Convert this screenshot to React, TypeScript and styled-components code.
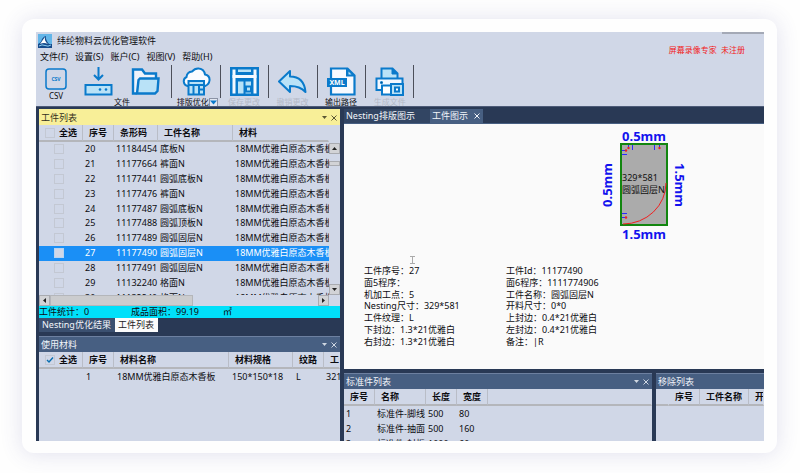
import React from "react";
import styled, { createGlobalStyle, css } from "styled-components";

const c = {
  surface: "#d0d7e7",
  dark: "#293955",
  bar: "#475f82",
  line: "#b4b6bb",
  icon: "#0a7acb",
  iconFill: "#b9e2f7",
};

const GlobalStyle = createGlobalStyle`
  * { box-sizing: border-box; }
  body {
    margin: 0;
    background: #fefefe;
    color: #0c0c10;
    font: 9px/12px "Noto Sans", "Noto Sans CJK SC", sans-serif;
  }
  button { font: inherit; color: inherit; border: 0; padding: 0; background: none; }
  svg { display: block; flex: none; }
`;

const Page = styled.div`
  height: 100vh;
  padding: 19px 23px 20px 22px;
  display: flex;
  overflow: hidden;
`;

const Card = styled.div`
  flex: 1;
  min-width: 0;
  padding: 13px 13px 12px 14px;
  border-radius: 12px;
  background: #fefefe;
  box-shadow: 0 1px 22px rgba(70, 70, 150, 0.16);
  display: flex;
`;

const AppWindow = styled.div`
  flex: 1;
  min-width: 0;
  display: flex;
  flex-direction: column;
  background: ${c.surface};
  overflow: hidden;
`;

const Header = styled.header`
  position: relative;
`;

const TitleBar = styled.div`
  height: 18px;
  padding-left: 2px;
  display: flex;
  align-items: center;
  gap: 5px;
`;

const MenuBar = styled.nav`
  height: 13px;
  padding-left: 4px;
  display: flex;
  align-items: center;
  gap: 7px;
`;

const Watermark = styled.div`
  position: absolute;
  right: 19px;
  top: 12px;
  font-size: 8px;
  color: #f21a1a;
`;

const EdgeTab = styled.div`
  position: absolute;
  right: 0;
  top: 0;
  width: 42px;
  height: 2px;
  background: #a4a9b6;
`;

const Toolbar = styled.div`
  height: 43px;
  padding-top: 2px;
  display: flex;
  align-items: flex-start;
  font-size: 8px;
  line-height: 10px;
`;

const FileGroup = styled.div`
  width: 135px;
  height: 41px;
  padding-left: 8px;
  display: flex;
  gap: 16px;
`;

const CsvButton = styled.button`
  width: 24px;
  padding-top: 3px;
  display: flex;
  flex-direction: column;
  align-items: center;
  gap: 1px;
`;

const FileTools = styled.div`
  display: flex;
  flex-direction: column;
  align-items: center;
`;

const IconRow = styled.div`
  height: 33px;
  display: flex;
  gap: 18px;
  align-items: center;
`;

const GroupStrip = styled.div`
  width: 244px;
  display: flex;
  border-right: 1px solid transparent;
`;

const Group = styled.div`
  flex: 1;
  display: flex;
  flex-direction: column;
`;

const GroupFace = styled.div<{ $last?: boolean }>`
  height: 33px;
  display: flex;
  align-items: center;
  justify-content: center;
  border-left: 1px solid #4c4f5a;
  ${(p) => p.$last && css`border-right: 1px solid #4c4f5a;`}
`;

const GroupLabel = styled.div<{ $off?: boolean; $drop?: boolean }>`
  display: flex;
  justify-content: center;
  height: 8px;
  line-height: 8px;
  white-space: nowrap;
  padding-left: ${(p) => (p.$drop ? "4px" : "0")};
  color: ${(p) => (p.$off ? "#b4bac8" : "#0c0c10")};
`;

const DropButton = styled.button`
  width: 9px;
  height: 9px;
  border: 1px solid #8b93a5;
  background: #e3e8f2;
  display: flex;
  align-items: center;
  justify-content: center;
`;

const Workspace = styled.main`
  flex: 1;
  min-height: 0;
  display: flex;
  gap: 4px;
  padding: 2px 0 0 3px;
  background: ${c.dark};
  border-top: 1px solid #4d5b78;
`;

const LeftDock = styled.div`
  width: 301px;
  flex: none;
  display: flex;
  flex-direction: column;
`;

const RightDock = styled.div`
  flex: 1;
  min-width: 0;
  display: flex;
  flex-direction: column;
`;

const Panel = styled.section<{ $grow?: boolean }>`
  display: flex;
  flex-direction: column;
  min-width: 0;
  min-height: 0;
  overflow: hidden;
  background: ${c.surface};
  ${(p) => p.$grow && css`flex: 1;`}
`;

const PanelTitle = styled.div<{ $active?: boolean }>`
  height: 16px;
  flex: none;
  padding: 0 3px 0 2px;
  display: flex;
  align-items: center;
  gap: 4px;
  white-space: nowrap;
  color: ${(p) => (p.$active ? "#33311c" : "#f2f5fa")};
  background: ${(p) => (p.$active ? "#f8ef98" : c.bar)};
  border-top: 1px solid ${(p) => (p.$active ? "#f8ef98" : "#6d80a0")};
`;

const PanelName = styled.span`
  flex: 1;
`;

const PanelButton = styled.button`
  display: flex;
  opacity: 0.8;
`;

const Table = styled.table<{ $fill?: boolean }>`
  table-layout: fixed;
  border-collapse: separate;
  border-spacing: 0;
  flex: none;
  width: ${(p) => (p.$fill ? "290px" : "100%")};
  ${(p) => p.$fill && css`height: 180px;`}
`;

const Th = styled.th<{ $plain?: boolean }>`
  height: 17px;
  padding: 0 0 0 6px;
  text-align: left;
  font-weight: 700;
  white-space: nowrap;
  overflow: hidden;
  border-right: 1px solid ${(p) => (p.$plain ? "transparent" : "#b9bdc7")};
  border-bottom: 2px solid ${c.line};
`;

const Td = styled.td<{ $indent?: boolean }>`
  padding: 0 0 0 ${(p) => (p.$indent ? "3px" : "2px")};
  white-space: nowrap;
  overflow: hidden;
`;

const Row = styled.tr<{ $selected?: boolean }>`
  ${(p) => p.$selected && css`background: #1a8ff6; color: #fff;`}
`;

const RoomyRow = styled.tr`
  height: 15px;
`;

const CheckLabel = styled.label`
  display: flex;
  align-items: center;
  gap: 4px;
`;

const Check = styled.input<{ $row?: boolean; $lit?: boolean }>`
  appearance: none;
  display: block;
  width: 10px;
  height: 10px;
  margin: 0 0 0 ${(p) => (p.$row ? "13px" : "0")};
  border: 1px solid ${(p) => (p.$lit ? "#b7d4f2" : "#c3c8d3")};
  background: ${(p) => (p.$lit ? "#d0d7e7" : "transparent")};
  &:checked {
    background: url("data:image/svg+xml,%3Csvg xmlns='http://www.w3.org/2000/svg' viewBox='0 0 8 8'%3E%3Cpath d='M1 4l2 2 4-4.500' fill='none' stroke='%230a6fb0' stroke-width='1.400'/%3E%3C/svg%3E") center / 8px no-repeat;
  }
`;

const ListArea = styled.div`
  height: 170px;
  flex: none;
  display: flex;
  overflow: hidden;
`;

const VScroll = styled.div`
  width: 11px;
  flex: none;
  margin-top: 18px;
  display: flex;
  flex-direction: column;
`;

const ScrollButton = styled.button`
  width: 11px;
  height: 11px;
  flex: none;
  display: flex;
  align-items: center;
  justify-content: center;
  border: 1px solid #a9abb0;
  background: #d2d3d6;
`;

const VThumb = styled.div`
  height: 5px;
  margin: 7px 0 auto;
  border: 1px solid #a9abb0;
  background: #d2d3d6;
`;

const HScroll = styled.div`
  height: 11px;
  flex: none;
  display: flex;
  padding-right: 11px;
`;

const HThumb = styled.div`
  width: 143px;
  margin-right: auto;
  border: 1px solid #b4b6ba;
  background: #cbccce;
`;

const Status = styled.div`
  height: 12px;
  flex: none;
  display: grid;
  grid-template-columns: 92px 92px 1fr;
  background: #00e0fa;
`;

const BottomTabs = styled.div`
  height: 18px;
  flex: none;
  display: flex;
  align-items: flex-start;
`;

const BottomTab = styled.button<{ $active?: boolean }>`
  height: 14px;
  padding: 0 4px 0 3px;
  white-space: nowrap;
  color: ${(p) => (p.$active ? "#222" : "#f2f5fa")};
  background: ${(p) => (p.$active ? "#fbfbfb" : "#3b5070")};
`;

const TopTabs = styled.div`
  height: 15px;
  flex: none;
  display: flex;
  border-bottom: 1px solid #475f82;
`;

const TopTab = styled.button<{ $active?: boolean }>`
  height: 14px;
  padding: 0 3px 0 2px;
  display: flex;
  align-items: center;
  gap: 6px;
  white-space: nowrap;
  color: #f2f5fa;
  min-width: ${(p) => (p.$active ? "0" : "86px")};
  background: ${(p) => (p.$active ? c.bar : "#324563")};
`;

const Canvas = styled.section`
  position: relative;
  flex: none;
  height: 245px;
  margin-bottom: 4px;
  padding-top: 4px;
  display: flex;
  flex-direction: column;
  background: #fafafa;
`;

const PartDrawing = styled.div`
  height: 137px;
  padding-right: 74px;
  display: flex;
  justify-content: flex-end;
`;

const TextCursor = styled.svg`
  position: absolute;
  left: 66px;
  top: 132px;
`;

const Info = styled.div`
  height: 82px;
  padding-left: 20px;
  display: grid;
  grid-template-columns: 142px 1fr;
  grid-auto-rows: 1fr;
  align-items: center;
  line-height: 11px;
  white-space: nowrap;
`;

const LowerPanels = styled.div`
  flex: 1;
  min-height: 0;
  display: grid;
  grid-template-columns: 308px 1fr;
  gap: 4px;
`;

function Logo() {
  return (
    <svg width="14" height="14" viewBox="0 0 14 14">
      <rect width="14" height="14" fill="#62b5e8" />
      <path d="M0 10q3-1 4-5 2-3 4-3-1 3 3 8h3v4H0z" fill="#154b8c" />
      <path d="M2 10l5-7q-1 4 3 7-4-2-8 0z" fill="#fff" />
      <path d="M1 12q3-2 6-.5t6-.5" stroke="#8fd0f2" fill="none" />
    </svg>
  );
}

function CsvIcon() {
  return (
    <svg width="22" height="22" viewBox="0 0 22 22">
      <rect x="1" y="1" width="20" height="20" rx="3" fill="none" stroke={c.icon} strokeWidth="1.500" />
      <text x="11" y="12.500" textAnchor="middle" fontSize="5" fontWeight="700" fill={c.icon}>CSV</text>
    </svg>
  );
}

function ImportIcon() {
  return (
    <svg width="29" height="29" viewBox="0 0 29 29" fill="none" stroke={c.icon} strokeWidth="2">
      <path d="M14.500 0v12M10 8l4.500 4.500L19 8" />
      <rect x="1.500" y="18" width="26" height="9.500" fill={c.iconFill} />
      <circle cx="16" cy="22.500" r="1.300" fill={c.icon} stroke="none" />
      <circle cx="22" cy="22.500" r="1.300" fill={c.icon} stroke="none" />
    </svg>
  );
}

function FolderIcon() {
  return (
    <svg width="29" height="29" viewBox="0 0 29 29" fill="none" stroke={c.icon} strokeWidth="2.400">
      <path d="M5.500 26.500H2V2.500h9l3 4h11v5" fill="#eef3fb" />
      <path d="M9 11.500h18.500L26.500 24l-2.500 2.500H6L7.500 13z" fill={c.iconFill} />
    </svg>
  );
}

function CloudIcon() {
  return (
    <svg width="30" height="29" viewBox="0 0 30 29" fill="none" stroke={c.icon} strokeWidth="2">
      <path d="M6.500 19A4.800 4.800 0 0 1 5.500 10Q6 5 11 4.500 14 1 18 1.500q5 .5 6 6 5 1 4.500 6-.5 4-4.500 5.500z" fill="#fafcff" />
      <rect x="7.500" y="14" width="15.500" height="13.500" fill={c.iconFill} />
      <path d="M7 18h16.500M12.500 18v9M18 18v9M18 22.500h5" />
    </svg>
  );
}

function SaveIcon() {
  return (
    <svg width="29" height="29" viewBox="0 0 29 29">
      <rect width="29" height="29" fill={c.icon} />
      <rect x="2.500" y="2.500" width="3" height="24" fill="#f4f9ff" />
      <rect x="23.500" y="2.500" width="3" height="24" fill="#f4f9ff" />
      <rect x="8" y="2.500" width="13" height="2.500" fill={c.iconFill} />
      <rect x="2.500" y="8" width="24" height="3" fill="#f4f9ff" />
      <rect x="8" y="14.500" width="13" height="12" fill={c.iconFill} />
      <path d="M14.500 12.500v16M16 19.500h5v5h-5z" stroke={c.icon} strokeWidth="2" fill={c.iconFill} />
    </svg>
  );
}

function UndoIcon() {
  return (
    <svg width="29" height="29" viewBox="0 0 29 29">
      <path d="M1 14.500L12 4v5.500q14 0 15.500 15.500Q22 19 12 19v6z" fill={c.iconFill} stroke={c.icon} strokeWidth="2" strokeLinejoin="round" />
    </svg>
  );
}

function XmlIcon() {
  return (
    <svg width="29" height="29" viewBox="0 0 29 29">
      <path d="M4 1.500h16.500l7 7v19H4z" fill="#f7faff" stroke={c.icon} strokeWidth="2.200" />
      <path d="M19 1l9 8.500h-9z" fill={c.icon} />
      <path d="M21.500 4.500v3h3z" fill={c.iconFill} />
      <rect x="0" y="11" width="20" height="9" fill={c.icon} />
      <text x="10" y="18" textAnchor="middle" fontSize="7" fontWeight="700" fill="#fff">XML</text>
    </svg>
  );
}

function PrintIcon() {
  return (
    <svg width="29" height="29" viewBox="0 0 29 29" stroke={c.icon} strokeWidth="2">
      <path d="M6.500 11V1.500h11l5 5V11" fill={c.iconFill} />
      <path d="M17 1v6h6z" fill={c.icon} strokeWidth="1" />
      <path d="M1.500 23V11.500h26V23z" fill="#f4f8ff" />
      <circle cx="6.500" cy="15.500" r=".6" />
      <path d="M7 18.500h10v9H7z" fill="#fff" />
      <rect x="16" y="17" width="12" height="11" fill={c.iconFill} />
      <rect x="20" y="20.500" width="4" height="4" fill="#fff" />
    </svg>
  );
}

function Arrow({ dir, color = "#222", size = 5 }: { dir: "up" | "down" | "left" | "right"; color?: string; size?: number }) {
  const points = { up: "0,4 5,4 2.5,1", down: "0,1 5,1 2.5,4", left: "4,0 4,5 1,2.5", right: "1,0 1,5 4,2.5" }[dir];
  return (
    <svg width={size} height={size} viewBox="0 0 5 5">
      <polygon points={points} fill={color} />
    </svg>
  );
}

function Cross() {
  return (
    <svg width="6" height="6" viewBox="0 0 6 6">
      <path d="M.5 .5l5 5m0-5l-5 5" stroke="currentColor" />
    </svg>
  );
}

function Title({ text, active, bare }: { text: string; active?: boolean; bare?: boolean }) {
  return (
    <PanelTitle $active={active}>
      <PanelName>{text}</PanelName>
      {!bare && (
        <>
          <PanelButton aria-label="选项"><Arrow dir="down" color="currentColor" /></PanelButton>
          <PanelButton aria-label="关闭"><Cross /></PanelButton>
        </>
      )}
    </PanelTitle>
  );
}

function Cols({ widths }: { widths: (number | undefined)[] }) {
  return <colgroup>{widths.map((w, i) => <col key={i} width={w} />)}</colgroup>;
}

const parts = [
  ["20", "11184454", "底板N"],
  ["21", "11177664", "裤面N"],
  ["22", "11177441", "圆弧底板N"],
  ["23", "11177476", "裤面N"],
  ["24", "11177487", "圆弧底板N"],
  ["25", "11177488", "圆弧顶板N"],
  ["26", "11177489", "圆弧固层N"],
  ["27", "11177490", "圆弧固层N"],
  ["28", "11177491", "圆弧固层N"],
  ["29", "11132240", "格面N"],
  ["30", "11132240", "格面N"],
];

const standard = [
  ["1", "标准件-脚线", "500", "80"],
  ["2", "标准件-抽面", "500", "160"],
  ["3", "标准件-封板", "1000", "60"],
];

const details = [
  "工件序号：27", "工件Id：11177490",
  "面5程序：", "面6程序：1111774906",
  "机加工点：5", "工件名称：圆弧固层N",
  "Nesting尺寸：329*581", "开料尺寸：0*0",
  "工件纹理：L", "上封边：0.4*21优雅白",
  "下封边：1.3*21优雅白", "左封边：0.4*21优雅白",
  "右封边：1.3*21优雅白", "备注：|R",
];

const tools = [
  { label: "排版优化", icon: <CloudIcon />, drop: true },
  { label: "保存更改", icon: <SaveIcon />, off: true },
  { label: "撤销更改", icon: <UndoIcon />, off: true },
  { label: "输出路径", icon: <XmlIcon /> },
  { label: "生成文件", icon: <PrintIcon />, off: true },
];

function PartSketch() {
  return (
    <svg width="90" height="116" viewBox="0 0 90 116" fontFamily='"Noto Sans", "Noto Sans CJK SC", sans-serif'>
      <rect x="21" y="16" width="46" height="81" fill="#ababab" stroke="#12860f" strokeWidth="2" />
      <path d="M66 55A43 41 0 0 1 23 96" fill="none" stroke="#f02020" />
      <g stroke="#2a2aff">
        <path d="M28.500 17v4M32.500 17v5M54.500 17v5M59.500 17v3M22 22.500h4M22 26.500h5M22 85.500h5M22 89.500h3" />
      </g>
      <g fill="#f02020">
        <circle cx="28.500" cy="20" r="1.200" />
        <circle cx="59.500" cy="20" r="1.200" />
        <circle cx="26" cy="22.500" r="1.200" />
        <circle cx="26" cy="89.500" r="1.200" />
      </g>
      <g fontSize="9" fill="#111">
        <text x="22" y="53">329*581</text>
        <text x="22" y="65">圆弧固层N</text>
      </g>
      <g fontSize="13" fontWeight="700" fill="#1212ee" textAnchor="middle">
        <text x="44" y="13">0.5mm</text>
        <text x="44" y="111">1.5mm</text>
        <text transform="translate(12 57) rotate(-90)">0.5mm</text>
        <text transform="translate(75 57) rotate(90)">1.5mm</text>
      </g>
    </svg>
  );
}

export default function App() {
  return (
    <Page>
      <GlobalStyle />
      <Card>
        <AppWindow>
          <Header>
            <TitleBar><Logo />纬纶物料云优化管理软件</TitleBar>
            <MenuBar>
              {["文件(F)", "设置(S)", "账户(C)", "视图(V)", "帮助(H)"].map((m) => <button key={m}>{m}</button>)}
            </MenuBar>
            <Watermark>屏幕录像专家&nbsp; 未注册</Watermark>
            <EdgeTab />
          </Header>
          <Toolbar>
            <FileGroup>
              <CsvButton><CsvIcon />CSV</CsvButton>
              <FileTools>
                <IconRow>
                  <button aria-label="导入"><ImportIcon /></button>
                  <button aria-label="打开"><FolderIcon /></button>
                </IconRow>
                <GroupLabel>文件</GroupLabel>
              </FileTools>
            </FileGroup>
            <GroupStrip>
              {tools.map((t, i) => (
                <Group key={t.label}>
                  <GroupFace $last={i === tools.length - 1}>
                    <button aria-label={t.label} disabled={t.off}>{t.icon}</button>
                  </GroupFace>
                  <GroupLabel $off={t.off} $drop={t.drop}>
                    {t.label}
                    {t.drop && <DropButton aria-label="更多"><Arrow dir="down" color={c.icon} size={7} /></DropButton>}
                  </GroupLabel>
                </Group>
              ))}
            </GroupStrip>
          </Toolbar>
          <Workspace>
            <LeftDock>
              <Panel>
                <Title text="工件列表" active />
                <ListArea>
                  <Table $fill>
                    <Cols widths={[44, 31, 44, 75, 96]} />
                    <thead>
                      <tr>
                        <Th><CheckLabel><Check type="checkbox" />全选</CheckLabel></Th>
                        <Th>序号</Th><Th>条形码</Th><Th>工件名称</Th><Th $plain>材料</Th>
                      </tr>
                    </thead>
                    <tbody>
                      {parts.map(([no, code, name]) => (
                        <Row key={no} $selected={no === "27"}>
                          <Td><Check type="checkbox" aria-label={no} $row $lit={no === "27"} /></Td>
                          <Td>{no}</Td><Td>{code}</Td><Td>{name}</Td><Td>18MM优雅白原态木香板</Td>
                        </Row>
                      ))}
                    </tbody>
                  </Table>
                  <VScroll>
                    <ScrollButton aria-label="向上"><Arrow dir="up" /></ScrollButton>
                    <VThumb />
                    <ScrollButton aria-label="向下"><Arrow dir="down" /></ScrollButton>
                  </VScroll>
                </ListArea>
                <HScroll>
                  <ScrollButton aria-label="向左"><Arrow dir="left" /></ScrollButton>
                  <HThumb />
                  <ScrollButton aria-label="向右"><Arrow dir="right" /></ScrollButton>
                </HScroll>
                <Status><span>工件统计：0</span><span>成品面积：99.19</span><span>㎡</span></Status>
              </Panel>
              <BottomTabs>
                <BottomTab>Nesting优化结果</BottomTab>
                <BottomTab $active>工件列表</BottomTab>
              </BottomTabs>
              <Panel $grow>
                <Title text="使用材料" />
                <Table>
                  <Cols widths={[44, 31, 115, 64, 31, undefined]} />
                  <thead>
                    <tr>
                      <Th><CheckLabel><Check type="checkbox" defaultChecked />全选</CheckLabel></Th>
                      <Th>序号</Th><Th>材料名称</Th><Th>材料规格</Th><Th>纹路</Th><Th $plain>工件</Th>
                    </tr>
                  </thead>
                  <tbody>
                    <RoomyRow>
                      <Td />
                      <Td $indent>1</Td><Td $indent>18MM优雅白原态木香板</Td><Td $indent>150*150*18</Td><Td $indent>L</Td><Td>321</Td>
                    </RoomyRow>
                  </tbody>
                </Table>
              </Panel>
            </LeftDock>
            <RightDock>
              <TopTabs>
                <TopTab>Nesting排版图示</TopTab>
                <TopTab $active>工件图示<Cross /></TopTab>
              </TopTabs>
              <Canvas>
                <PartDrawing><PartSketch /></PartDrawing>
                <TextCursor width="5" height="8" viewBox="0 0 5 8">
                  <path d="M0 .5h5M2.500 .5v7M0 7.500h5" stroke="#aaa" fill="none" />
                </TextCursor>
                <Info>{details.map((d) => <span key={d}>{d}</span>)}</Info>
              </Canvas>
              <LowerPanels>
                <Panel>
                  <Title text="标准件列表" />
                  <Table>
                    <Cols widths={[31, 51, 31, 31, undefined]} />
                    <thead>
                      <tr><Th>序号</Th><Th>名称</Th><Th>长度</Th><Th>宽度</Th><Th $plain /></tr>
                    </thead>
                    <tbody>
                      {standard.map((r) => (
                        <RoomyRow key={r[0]}>{r.map((v, i) => <Td key={i}>{v}</Td>)}<Td /></RoomyRow>
                      ))}
                    </tbody>
                  </Table>
                </Panel>
                <Panel>
                  <Title text="移除列表" bare />
                  <Table>
                    <Cols widths={[13, 31, 49, undefined]} />
                    <thead>
                      <tr><Th $plain /><Th>序号</Th><Th>工件名称</Th><Th $plain>开料</Th></tr>
                    </thead>
                  </Table>
                </Panel>
              </LowerPanels>
            </RightDock>
          </Workspace>
        </AppWindow>
      </Card>
    </Page>
  );
}
